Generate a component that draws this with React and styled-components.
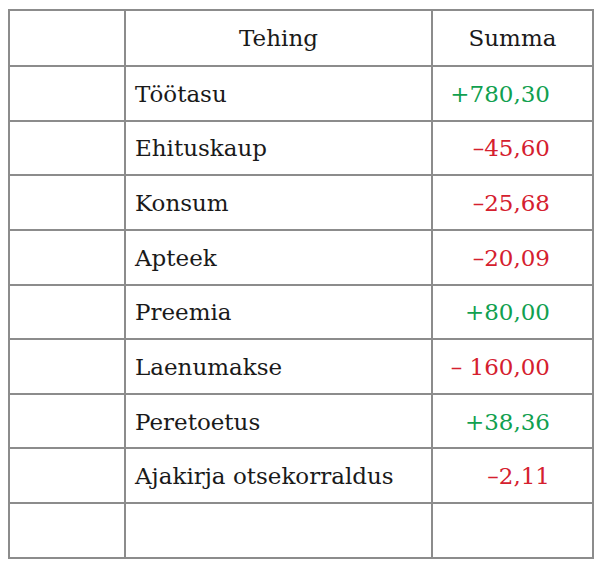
import styled, { createGlobalStyle } from 'styled-components';

const GlobalStyle = createGlobalStyle`
  html, body {
    margin: 0;
    background: #ffffff;
  }
  body {
    padding: 9px 8px;
  }
`;

const Table = styled.table`
  width: 584px;
  border-collapse: collapse;
  table-layout: fixed;
  font-family: "DejaVu Serif", "Liberation Serif", serif;
  font-size: 23px;
  color: #1a1a1a;
`;

const Th = styled.th`
  height: 54px;
  padding: 0;
  border: 2px solid #8c8c8c;
  font-weight: normal;
  text-align: center;
  vertical-align: middle;
`;

const Td = styled.td`
  height: 51.65px;
  padding: 1px ${({ $amount }) => ($amount ? '42px' : '10px')} 0 9px;
  border: 2px solid #8c8c8c;
  text-align: ${({ $amount }) => ($amount ? 'right' : 'left')};
  vertical-align: middle;
  white-space: nowrap;
  color: ${({ $tone }) => {
    if ($tone === 'plus') return '#11a04f';
    if ($tone === 'minus') return '#d5202e';
    return '#1a1a1a';
  }};
`;

const rows = [
  { name: 'Töötasu', sum: '+780,30' },
  { name: 'Ehituskaup', sum: '–45,60' },
  { name: 'Konsum', sum: '–25,68' },
  { name: 'Apteek', sum: '–20,09' },
  { name: 'Preemia', sum: '+80,00' },
  { name: 'Laenumakse', sum: '– 160,00' },
  { name: 'Peretoetus', sum: '+38,36' },
  { name: 'Ajakirja otsekorraldus', sum: '–2,11' },
  { name: '', sum: '' },
];

export default function App() {
  return (
    <>
      <GlobalStyle />
      <Table>
        <colgroup>
          <col style={{ width: 116 }} />
          <col style={{ width: 307 }} />
          <col style={{ width: 161 }} />
        </colgroup>
        <thead>
          <tr>
            <Th />
            <Th>Tehing</Th>
            <Th>Summa</Th>
          </tr>
        </thead>
        <tbody>
          {rows.map((row, i) => (
            <tr key={i}>
              <Td />
              <Td>{row.name}</Td>
              <Td $amount $tone={row.sum.startsWith('+') ? 'plus' : 'minus'}>
                {row.sum}
              </Td>
            </tr>
          ))}
        </tbody>
      </Table>
    </>
  );
}
